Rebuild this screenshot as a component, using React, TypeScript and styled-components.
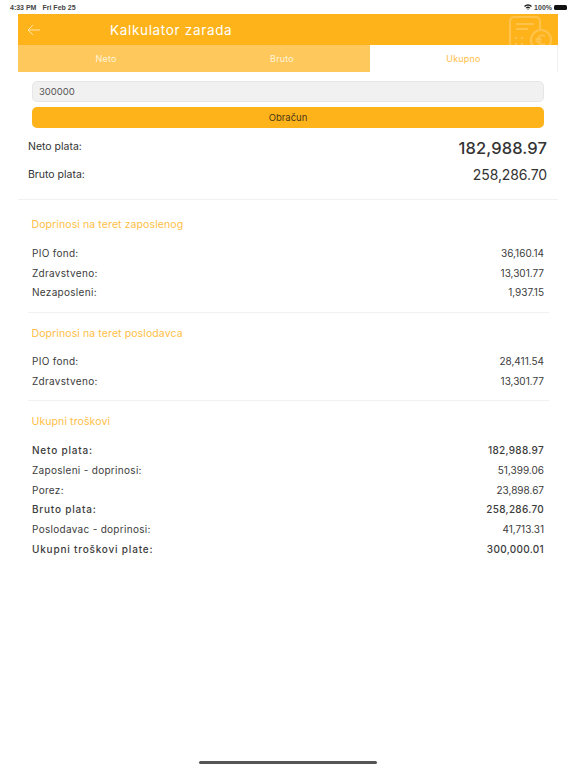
import styled, { createGlobalStyle } from "styled-components";

const GlobalStyle = createGlobalStyle`
  html, body {
    margin: 0;
    padding: 0;
    background: #fff;
  }
  body {
    font-family: Inter, "Noto Sans", sans-serif;
    color: #333;
  }
`;

const Page = styled.div`
  width: 576px;
  height: 768px;
  display: flex;
  flex-direction: column;
  overflow: hidden;
  position: relative;
`;

const StatusBar = styled.div`
  height: 14px;
  padding: 0 9px 0 10px;
  display: flex;
  align-items: center;
  justify-content: space-between;
  font-family: "Liberation Sans", sans-serif;
  font-size: 7px;
  font-weight: 700;
  color: #444;
`;

const StatusGroup = styled.div`
  display: flex;
  align-items: center;
  gap: 6px;
`;

const StatusIcons = styled(StatusGroup)`
  gap: 2px;
`;

const Battery = styled.span`
  width: 13px;
  height: 5px;
  border-radius: 1.5px;
  background: #111;
`;

const Main = styled.div`
  margin: 0 18px;
`;

const Header = styled.div`
  height: 31px;
  background: #ffb31a;
  display: flex;
  align-items: center;
  padding-left: 9px;
  position: relative;
  overflow: hidden;
`;

const Title = styled.div`
  margin-left: 69px;
  font-size: 13.5px;
  letter-spacing: 0.67px;
  color: #fff;
  font-weight: 400;
`;

const Watermark = styled.svg`
  position: absolute;
  right: 4px;
  top: 1px;
`;

const Tabs = styled.div`
  display: grid;
  grid-template-columns: 176px 176px 1fr;
  height: 27px;
  border-right: 1px solid #f2f2f2;
`;

const Tab = styled.div<{ $active?: boolean }>`
  display: flex;
  align-items: center;
  justify-content: center;
  font-size: 9px;
  letter-spacing: 0.2px;
  background: ${(p) => (p.$active ? "#fff" : "#ffc85c")};
  color: ${(p) => (p.$active ? "#ffbe45" : "#fff3d8")};
`;

const Form = styled.div`
  margin: 9px 14px 0;
  display: flex;
  flex-direction: column;
  gap: 5px;
`;

const Input = styled.div`
  height: 19px;
  border: 1px solid #e6e6e6;
  border-radius: 5px;
  background: #f1f1f1;
  padding-left: 6px;
  display: flex;
  align-items: center;
  font-size: 9.5px;
  color: #555;
`;

const Button = styled.div`
  height: 21px;
  border-radius: 5px;
  background: #ffb31a;
  display: flex;
  align-items: center;
  justify-content: center;
  font-size: 9.5px;
  color: #4a3a17;
`;

const Summary = styled.div`
  padding: 7px 11px 0 10px;
  height: 72px;
  box-sizing: border-box;
  border-bottom: 1px solid #f1f1f1;
`;

const SummaryRow = styled.div`
  height: 26px;
  display: flex;
  align-items: center;
  justify-content: space-between;
  font-size: 10.5px;
  color: #333;
`;

const SummaryLabel = styled.span<{ $raised?: boolean }>`
  margin-bottom: ${(p) => (p.$raised ? "4px" : "0")};
`;

const SummaryValue = styled.span<{ $big?: boolean }>`
  font-weight: ${(p) => (p.$big ? 500 : 400)};
  font-size: ${(p) => (p.$big ? "16.5px" : "14px")};
  letter-spacing: ${(p) => (p.$big ? "0.1px" : "-0.1px")};
`;

const Section = styled.section<{ $first?: boolean; $divider?: boolean }>`
  margin: 0 9px 0 10px;
  padding-left: 4px;
  padding-top: ${(p) => (p.$first ? "17px" : "13px")};
  padding-bottom: ${(p) => (p.$divider ? "9.5px" : "0")};
  border-bottom: ${(p) => (p.$divider ? "1px solid #f1f1f1" : "none")};
`;

const SectionTitle = styled.div`
  font-size: 10.5px;
  letter-spacing: 0.1px;
  line-height: 16px;
  color: #ffbe45;
  margin: 0 0 10px -0.5px;
`;

const Row = styled.div<{ $bold?: boolean }>`
  height: 19.7px;
  display: flex;
  align-items: center;
  justify-content: space-between;
  padding-right: 5px;
  font-size: 10px;
  font-weight: ${(p) => (p.$bold ? 500 : 400)};
  color: #3c3c3c;
`;

const RowLabel = styled.span<{ $bold?: boolean }>`
  letter-spacing: ${(p) => (p.$bold ? "0.8px" : "0.3px")};
`;

const RowValue = styled.span<{ $bold?: boolean }>`
  letter-spacing: ${(p) => (p.$bold ? "0.3px" : "0")};
`;

const HomeBar = styled.div`
  position: absolute;
  left: 199px;
  bottom: 4px;
  width: 178px;
  height: 3px;
  border-radius: 2px;
  background: #555;
`;

type Item = { label: string; value: string; bold?: boolean };

const employee: Item[] = [
  { label: "PIO fond:", value: "36,160.14" },
  { label: "Zdravstveno:", value: "13,301.77" },
  { label: "Nezaposleni:", value: "1,937.15" },
];

const employer: Item[] = [
  { label: "PIO fond:", value: "28,411.54" },
  { label: "Zdravstveno:", value: "13,301.77" },
];

const totals: Item[] = [
  { label: "Neto plata:", value: "182,988.97", bold: true },
  { label: "Zaposleni - doprinosi:", value: "51,399.06" },
  { label: "Porez:", value: "23,898.67" },
  { label: "Bruto plata:", value: "258,286.70", bold: true },
  { label: "Poslodavac - doprinosi:", value: "41,713.31" },
  { label: "Ukupni troškovi plate:", value: "300,000.01", bold: true },
];

function Rows({ items }: { items: Item[] }) {
  return (
    <>
      {items.map((item) => (
        <Row key={item.label} $bold={item.bold}>
          <RowLabel $bold={item.bold}>{item.label}</RowLabel>
          <RowValue $bold={item.bold}>{item.value}</RowValue>
        </Row>
      ))}
    </>
  );
}

export default function App() {
  return (
    <Page>
      <GlobalStyle />
      <StatusBar>
        <StatusGroup>
          <span>4:33 PM</span>
          <span>Fri Feb 25</span>
        </StatusGroup>
        <StatusIcons>
          <svg width="8" height="6" viewBox="0 0 8 6">
            <path d="M0 2 A5.6 5.6 0 0 1 8 2 L7 3 A4.2 4.2 0 0 0 1 3Z M1.7 3.7 A3.2 3.2 0 0 1 6.3 3.7 L5.4 4.6 A2 2 0 0 0 2.6 4.6Z M3.2 5.1 A1.1 1.1 0 0 1 4.8 5.1 L4 6Z" fill="#222" />
          </svg>
          <span>100%</span>
          <Battery />
        </StatusIcons>
      </StatusBar>
      <Main>
        <Header>
          <svg width="14" height="12" viewBox="0 0 14 12" fill="none" stroke="#ffe2a8" strokeWidth="1">
            <path d="M13 6H1M6 1L1 6l5 5" />
          </svg>
          <Title>Kalkulator zarada</Title>
          <Watermark width="48" height="44" viewBox="0 0 48 44" fill="none" stroke="#ffc24a" strokeWidth="2.2">
            <path d="M24 32H8a4 4 0 0 1-4-4V6a4 4 0 0 1 4-4h22a4 4 0 0 1 4 4v9" />
            <path d="M10 9h18M10 14h12M9 23h2M15 23h2M9 29h2M15 29h2" />
            <circle cx="35" cy="25" r="10" />
            <path d="M39 21.5a4.5 4.5 0 1 0 0 7M29.5 24h6M29.5 26.5h6" strokeWidth="1.8" />
          </Watermark>
        </Header>
        <Tabs>
          <Tab>Neto</Tab>
          <Tab>Bruto</Tab>
          <Tab $active>Ukupno</Tab>
        </Tabs>
        <Form>
          <Input>300000</Input>
          <Button>Obračun</Button>
        </Form>
        <Summary>
          <SummaryRow>
            <SummaryLabel $raised>Neto plata:</SummaryLabel>
            <SummaryValue $big>182,988.97</SummaryValue>
          </SummaryRow>
          <SummaryRow>
            <SummaryLabel>Bruto plata:</SummaryLabel>
            <SummaryValue>258,286.70</SummaryValue>
          </SummaryRow>
        </Summary>
        <Section $first $divider>
          <SectionTitle>Doprinosi na teret zaposlenog</SectionTitle>
          <Rows items={employee} />
        </Section>
        <Section $divider>
          <SectionTitle>Doprinosi na teret poslodavca</SectionTitle>
          <Rows items={employer} />
        </Section>
        <Section>
          <SectionTitle>Ukupni troškovi</SectionTitle>
          <Rows items={totals} />
        </Section>
      </Main>
      <HomeBar />
    </Page>
  );
}
